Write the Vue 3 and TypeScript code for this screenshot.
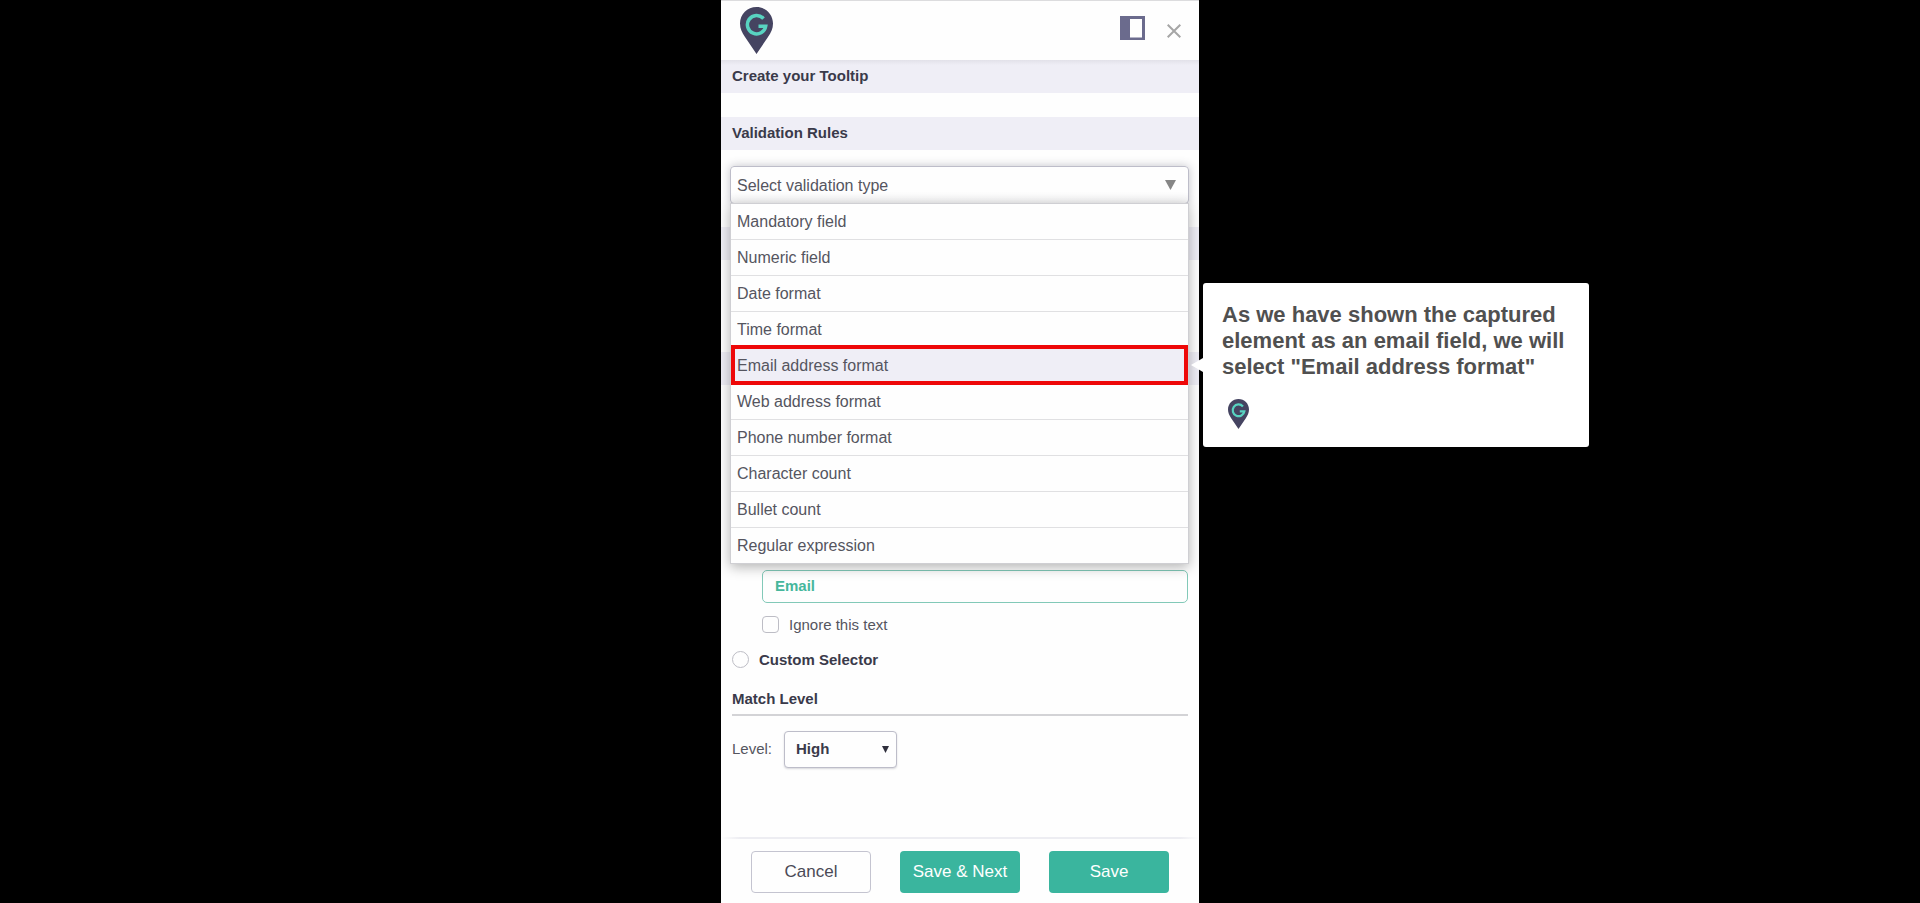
<script setup lang="ts">
import { ref } from 'vue'

const rules: string[] = [
  'Mandatory field',
  'Numeric field',
  'Date format',
  'Time format',
  'Email address format',
  'Web address format',
  'Phone number format',
  'Character count',
  'Bullet count',
  'Regular expression',
]
const highlighted = ref('Email address format')
const elementText = ref('Email')
const ignoreText = ref(false)
const selector = ref('')
const level = ref('High')
</script>

<template>
  <main class="stage">
    <section class="panel">
      <header class="top">
        <svg class="pin" viewBox="0 0 33 47" aria-hidden="true">
          <path class="pin-body" d="M16.500 0C7.300 0 0 7.300 0 16.500C0 21.500 2 25.800 5 30L16.500 47L28 30C31 25.800 33 21.500 33 16.500C33 7.300 25.700 0 16.500 0Z" />
          <path class="pin-mark" d="M23.500 11.600A9.200 9.200 0 1 0 25.700 19.200H18.500" />
        </svg>
        <div class="tools">
          <button class="icon dock" type="button" aria-label="Dock panel">
            <svg viewBox="0 0 25 24" aria-hidden="true">
              <path fill="#6b6b8d" fill-rule="evenodd" d="M0 0H25V24H0ZM10 3V21.500H22V3Z" />
            </svg>
          </button>
          <button class="icon close" type="button" aria-label="Close">
            <svg viewBox="0 0 14 14" aria-hidden="true">
              <path d="M0.700 0.700L13.300 13.300M13.300 0.700L0.700 13.300" fill="none" stroke="#a6a6a6" stroke-width="2" />
            </svg>
          </button>
        </div>
      </header>

      <div class="body">
        <h2 class="bar">Create your Tooltip</h2>
        <h2 class="bar rules">Validation Rules</h2>
        <div class="picker">
          <select class="type" aria-label="Validation type">
            <option>Select validation type</option>
          </select>
          <svg class="arrow" viewBox="0 0 11 10" aria-hidden="true"><path fill="#868686" d="M0 0H11L5.500 10Z" /></svg>
          <ul class="menu">
            <li v-for="rule in rules" :key="rule" :class="{ chosen: rule === highlighted }">
              <button class="rule" type="button" @click="highlighted = rule">{{ rule }}</button>
              <aside v-if="rule === highlighted" class="callout">
                <p>As we have shown the captured element as an email field, we will select "Email address format"</p>
                <svg class="pin small" viewBox="0 0 33 47" aria-hidden="true">
                  <path class="pin-body" d="M16.500 0C7.300 0 0 7.300 0 16.500C0 21.500 2 25.800 5 30L16.500 47L28 30C31 25.800 33 21.500 33 16.500C33 7.300 25.700 0 16.500 0Z" />
                  <path class="pin-mark" d="M23.500 11.600A9.200 9.200 0 1 0 25.700 19.200H18.500" />
                </svg>
              </aside>
            </li>
          </ul>
        </div>
        <div class="bar placement"></div>
        <div class="bar element"></div>

        <div class="fields">
          <input v-model="elementText" class="text" type="text" aria-label="Element text" />
          <label class="check">
            <input v-model="ignoreText" type="checkbox" />
            <span>Ignore this text</span>
          </label>
          <label class="radio">
            <input v-model="selector" type="radio" name="selector" value="custom" />
            <span>Custom Selector</span>
          </label>
          <h3 class="match">Match Level</h3>
          <div class="level">
            <label for="level">Level:</label>
            <div class="level-box">
              <select id="level" v-model="level">
                <option>High</option>
              </select>
              <svg class="level-arrow" viewBox="0 0 7 7" aria-hidden="true"><path fill="#2f2f3d" d="M0 0H7L3.500 7Z" /></svg>
            </div>
          </div>
        </div>
      </div>

      <footer class="actions">
        <button class="action cancel" type="button">Cancel</button>
        <button class="action" type="button">Save &amp; Next</button>
        <button class="action" type="button">Save</button>
      </footer>
    </section>
  </main>
</template>

<style>
body {
  background: #000;
}
</style>

<style scoped>
.stage,
.stage * {
  box-sizing: border-box;
}
.stage {
  display: flex;
  justify-content: center;
  min-height: 100vh;
  background: #000;
  font-family: "Liberation Sans", Arial, sans-serif;
  font-size: 16px;
  color: #55555f;
}
button,
input,
select {
  font: inherit;
  color: inherit;
  margin: 0;
}
.panel {
  display: flex;
  flex-direction: column;
  width: 100%;
  max-width: 478px;
  background: #fefefe;
}
.top {
  display: flex;
  justify-content: space-between;
  align-items: flex-start;
  height: 60px;
  padding: 6px 18px 0 19px;
  border-top: 1px solid #dcdcde;
  background: #fefefe;
}
.pin {
  display: block;
  width: 33px;
  height: 47px;
}
.pin-body {
  fill: #454461;
}
.pin-mark {
  fill: none;
  stroke: #58d3c1;
  stroke-width: 3.5;
}
.tools {
  display: flex;
  align-items: flex-start;
  gap: 22px;
  padding-top: 9px;
}
.icon {
  display: block;
  padding: 0;
  border: 0;
  background: none;
}
.icon svg {
  display: block;
  width: 100%;
}
.dock {
  width: 25px;
}
.close {
  width: 14px;
  margin-top: 8px;
}
.body {
  flex: 1;
}
.bar {
  height: 33px;
  margin: 0;
  padding: 0 11px;
  background: #efeef6;
  font-size: 15px;
  font-weight: bold;
  line-height: 32px;
  color: #3a3a4a;
}
.bar:first-child {
  background: linear-gradient(#e2e1e9, #efeef6 5px);
}
.rules {
  margin-top: 24px;
}
.placement {
  margin-top: 23px;
}
.element {
  margin-top: 92px;
}
.picker {
  position: relative;
  margin: 16px 10px 0 9px;
}
.type {
  display: block;
  width: 100%;
  height: 38px;
  padding: 0 6px;
  appearance: none;
  border: 1px solid #bdbdc9;
  border-radius: 4px;
  background: linear-gradient(#fefefe 70%, #f5f5f6);
  box-shadow: 0 0 10px rgba(60, 60, 80, 0.3);
}
.arrow {
  position: absolute;
  top: 14px;
  right: 13px;
  width: 11px;
  height: 10px;
  pointer-events: none;
}
.menu {
  position: absolute;
  z-index: 2;
  top: 37px;
  left: 0;
  right: 0;
  margin: 0;
  padding: 0;
  list-style: none;
  border: 1px solid #cfcfd3;
  background: #fefefe;
  box-shadow: 0 3px 12px rgba(0, 0, 0, 0.3);
}
.menu li {
  position: relative;
  height: 36px;
  border-bottom: 1px solid #e0e0e2;
}
.menu li:last-child {
  height: 35px;
  border-bottom: 0;
}
.rule {
  display: block;
  width: 100%;
  height: 100%;
  padding: 0 6px;
  border: 0;
  background: none;
  text-align: left;
}
.menu .chosen {
  border-bottom: 0;
  background: #efeef6;
}
.chosen::after {
  content: "";
  position: absolute;
  inset: -3px 0 -1px;
  border: 4px solid #ee0808;
  pointer-events: none;
}
.callout {
  position: absolute;
  z-index: 3;
  top: -65px;
  left: calc(100% + 15px);
  width: 386px;
  padding: 19px 19px 18px;
  border-radius: 3px;
  background: #fff;
  color: #505050;
}
.callout::before {
  content: "";
  position: absolute;
  top: 75px;
  left: -12px;
  border: solid transparent;
  border-width: 7px 12px 7px 0;
  border-right-color: #fff;
}
.callout p {
  margin: 0 0 19px;
  font-size: 22px;
  font-weight: bold;
  line-height: 26px;
}
.small {
  width: 21px;
  height: 30px;
  margin-left: 6px;
}
.fields {
  display: flex;
  flex-direction: column;
  align-items: stretch;
  margin-top: 185px;
  padding: 0 11px;
}
.text {
  height: 33px;
  margin-left: 30px;
  padding: 0 12px 2px;
  border: 1px solid #82c9b8;
  border-radius: 5px;
  background: #fefefe;
  font-size: 15px;
  font-weight: bold;
  color: #46b79c;
}
.check,
.radio {
  display: flex;
  align-items: center;
  gap: 10px;
  height: 18px;
}
.check {
  margin: 12px 0 0 30px;
  font-size: 15px;
}
.radio {
  margin-top: 17px;
  font-size: 15px;
  font-weight: bold;
  color: #3a3a4a;
}
.check input,
.radio input {
  width: 17px;
  height: 17px;
  appearance: none;
  border: 1px solid #bdbdc5;
  border-radius: 4px;
  background: #fefefe;
}
.radio input {
  border-radius: 50%;
}
.match {
  margin: 22px 0 0;
  padding-bottom: 6px;
  border-bottom: 2px solid #d3d3d6;
  font-size: 15px;
  line-height: 18px;
  color: #3a3a4a;
}
.level {
  display: flex;
  align-items: center;
  gap: 12px;
  margin-top: 15px;
  font-size: 15px;
}
.level label {
  padding-bottom: 2px;
}
.level-box {
  position: relative;
}
.level select {
  display: block;
  width: 113px;
  height: 37px;
  padding: 0 11px 2px;
  appearance: none;
  border: 1px solid #bdbdc9;
  border-radius: 4px;
  background: #fefefe;
  box-shadow: 0 1px 2px rgba(60, 60, 80, 0.2);
  font-weight: bold;
  color: #3a3a4a;
}
.level-arrow {
  position: absolute;
  top: 15px;
  right: 8px;
  width: 7px;
  height: 7px;
  pointer-events: none;
}
.actions {
  display: flex;
  justify-content: center;
  gap: 29px;
  padding: 14px 0 10px;
  background: linear-gradient(90deg, transparent, #ededf2 4%, #ededf2 96%, transparent) top / 100% 2px no-repeat;
}
.action {
  width: 120px;
  height: 42px;
  border: 0;
  border-radius: 4px;
  background: #3ab59e;
  font-size: 17px;
  color: #fff;
}
.cancel {
  border: 1px solid #c4c4d0;
  background: #fefefe;
  color: #4a4a56;
}
</style>
